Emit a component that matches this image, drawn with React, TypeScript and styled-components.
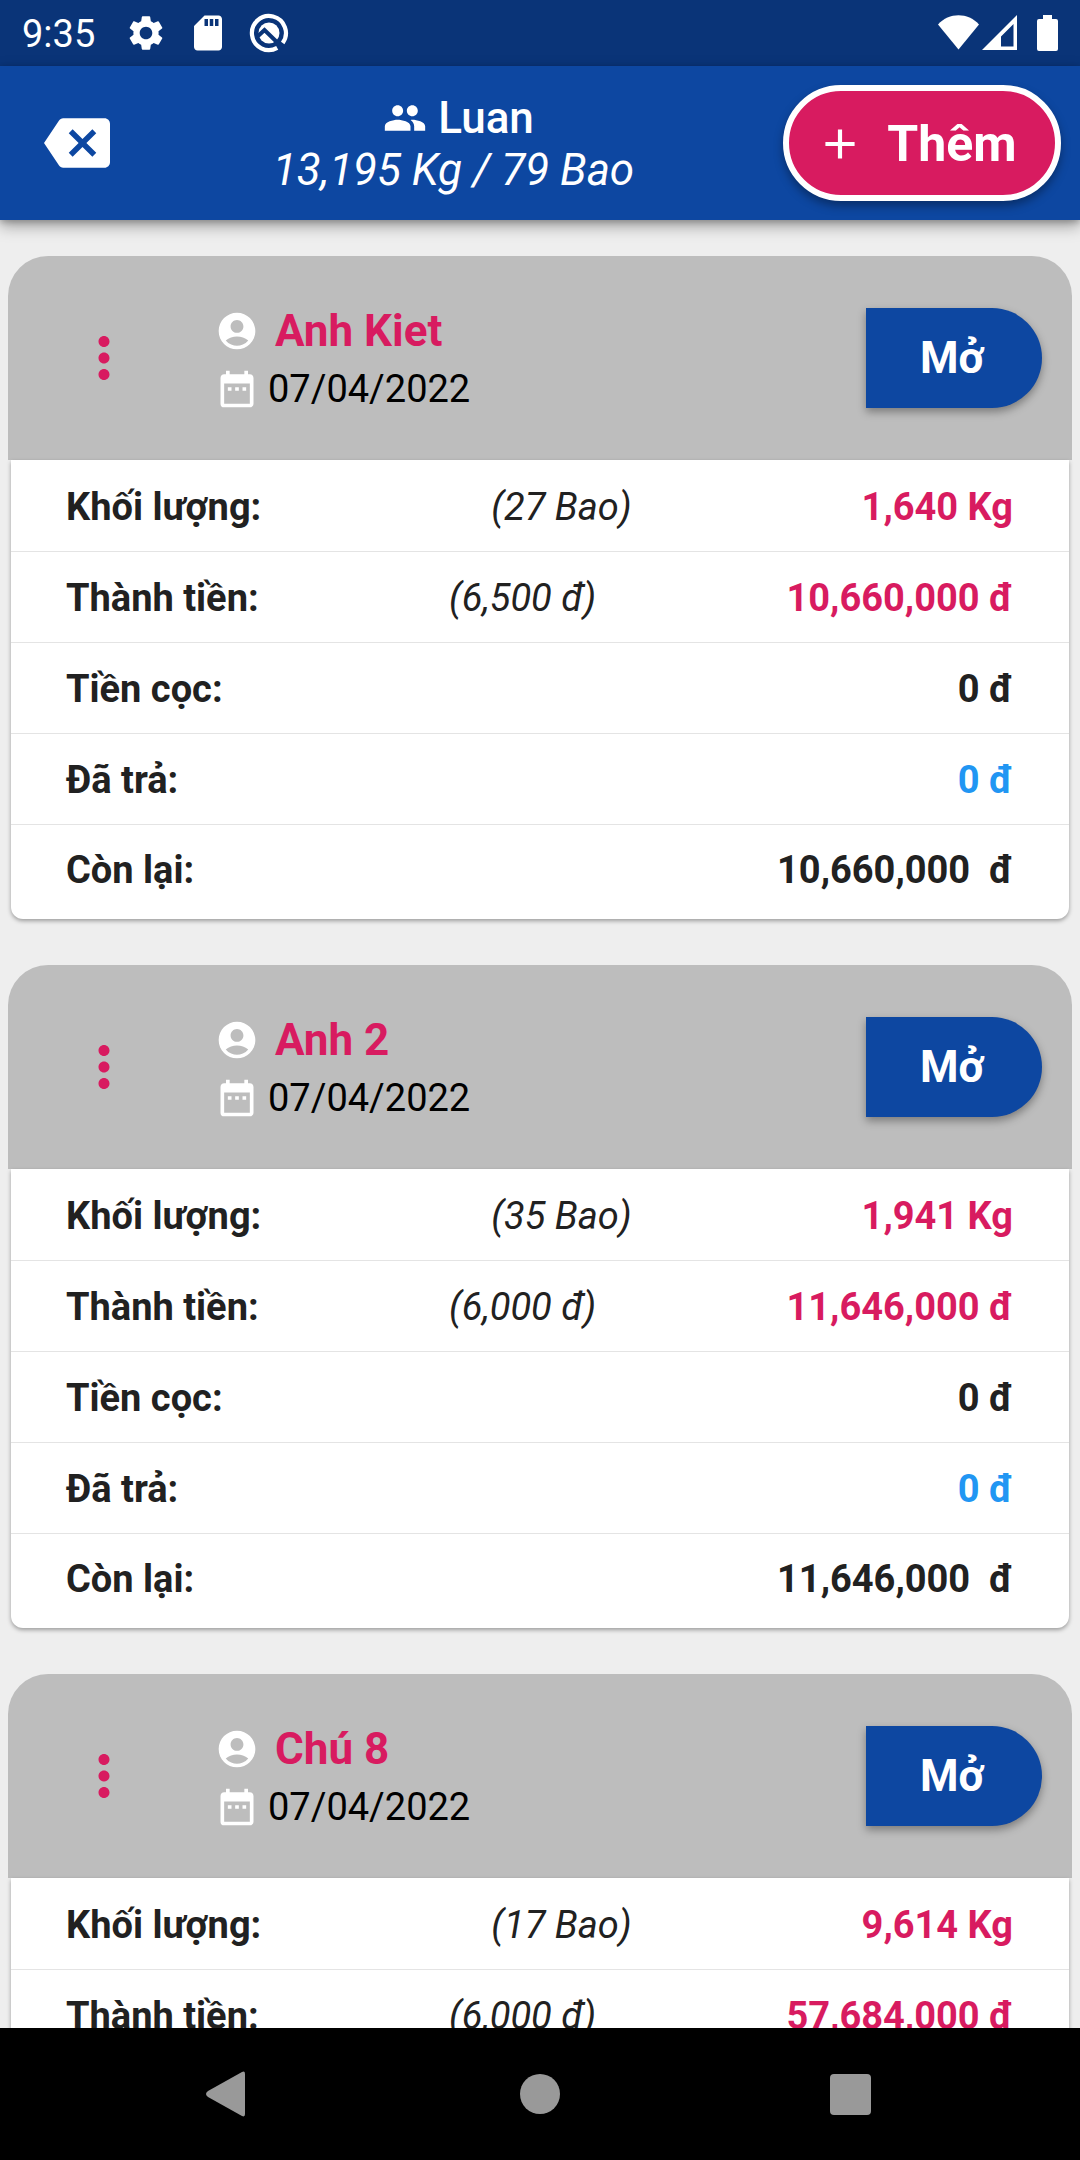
import React from "react";
import styled, { createGlobalStyle } from "styled-components";
import {
  MdAccountCircle,
  MdAdd,
  MdBackspace,
  MdDateRange,
  MdMoreVert,
  MdPeople,
  MdSdCard,
  MdSettings,
} from "react-icons/md";

const color = {
  statusBar: "#0a3478",
  primary: "#0d47a1",
  accent: "#d81b60",
  page: "#eeeeee",
  cardHeader: "#bdbdbd",
  text: "#212121",
  info: "#2196f3",
  divider: "#e4e4e4",
  navIcon: "#999999",
};

const GlobalStyle = createGlobalStyle`
  *, *::before, *::after { box-sizing: border-box; }
  body {
    margin: 0;
    background: ${color.page};
    color: ${color.text};
    font-family: Roboto, "Noto Sans", sans-serif;
    font-size: 38px;
    line-height: 44px;
  }
  button { font: inherit; color: inherit; border: 0; padding: 0; background: none; cursor: pointer; }
  h1, h2, p, dl, dd, dt { margin: 0; font: inherit; }
  svg { display: block; flex: none; }
`;

const Screen = styled.div`
  display: flex;
  flex-direction: column;
  height: 100vh;
  overflow: hidden;
`;

const StatusBar = styled.div`
  flex: none;
  display: flex;
  justify-content: space-between;
  align-items: center;
  height: 66px;
  padding: 0 22px;
  background: ${color.statusBar};
  color: #fff;
`;

const StatusGroup = styled.div`
  display: flex;
  align-items: center;
  gap: 20px;
`;

const Reception = styled.div`
  display: flex;
  gap: 3px;
`;

const Clock = styled.time`
  padding-top: 2px;
  margin-right: 10px;
`;

const AppBar = styled.header`
  flex: none;
  z-index: 1;
  display: flex;
  align-items: center;
  height: 154px;
  padding: 0 19px 0 44px;
  background: ${color.primary};
  color: #fff;
  box-shadow: 0 6px 14px rgba(0, 0, 0, 0.34), 0 2px 6px rgba(0, 0, 0, 0.2);
`;

const IconButton = styled.button`
  flex: none;
`;

const Title = styled.div`
  flex: 1;
  display: flex;
  flex-direction: column;
  align-items: center;
  padding: 1px 0 0 14px;
  font-size: 44px;
  line-height: 52px;
`;

const TitleName = styled.h1`
  && {
    display: flex;
    align-items: center;
    gap: 11px;
    padding-left: 10px;
    font-weight: 500;
  }
`;

const TitleTotal = styled.p`
  && {
    font-style: italic;
  }
`;

const AddButton = styled.button`
  && {
    display: flex;
    align-items: center;
    justify-content: center;
    gap: 22px;
    width: 278px;
    height: 116px;
    padding: 2px 12px 0 0;
    border: 6px solid #fff;
    border-radius: 58px;
    background: ${color.accent};
    font-size: 50px;
    font-weight: 700;
    box-shadow: 0 5px 10px rgba(0, 0, 0, 0.35);
  }
`;

const List = styled.main`
  flex: 1;
  min-height: 0;
  overflow-y: auto;
  scrollbar-width: none;
  display: flex;
  flex-direction: column;
  gap: 46px;
  padding: 36px 8px;
`;

const Card = styled.article`
  flex: none;
`;

const CardHeader = styled.header`
  display: flex;
  align-items: center;
  height: 204px;
  padding: 0 30px 0 63px;
  border-radius: 40px 40px 0 0;
  background: ${color.cardHeader};
`;

const MenuButton = styled(IconButton)`
  && {
    color: ${color.accent};
  }
`;

const Person = styled.div`
  flex: 1;
  display: flex;
  flex-direction: column;
  padding: 4px 0 0 78px;
`;

const PersonName = styled.h2`
  && {
    display: flex;
    align-items: center;
    gap: 16px;
    color: ${color.accent};
    font-size: 44px;
    line-height: 58px;
    font-weight: 700;
  }
`;

const PersonDate = styled.p`
  && {
    display: flex;
    align-items: center;
    gap: 9px;
    line-height: 58px;
    color: #000;
  }
`;

const OpenButton = styled.button`
  && {
    width: 176px;
    height: 100px;
    padding-right: 4px;
    border-radius: 0 50px 50px 0;
    background: ${color.primary};
    color: #fff;
    font-size: 44px;
    font-weight: 700;
    box-shadow: 0 4px 8px rgba(0, 0, 0, 0.35);
  }
`;

const CardBody = styled.dl`
  && {
    margin: 0 3px;
    padding: 1px 0 7px;
    border-radius: 0 0 12px 12px;
    background: #fff;
    box-shadow: 0 2px 4px rgba(0, 0, 0, 0.35);
  }
`;

const Row = styled.div`
  display: flex;
  align-items: center;
  justify-content: space-between;
  height: 91px;
  padding: 2px 56px 0 55px;
  border-bottom: 1px solid ${color.divider};

  &:last-child {
    height: 87px;
    border-bottom: 0;
  }
`;

const Label = styled.dt`
  && {
    font-weight: 700;
  }
`;

const Note = styled.dd`
  && {
    font-style: italic;
  }
`;

const Value = styled.dd<{ $tone?: string }>`
  && {
    font-weight: 700;
    white-space: pre;
    color: ${(p) => p.$tone ?? color.text};
  }
`;

const NavBar = styled.nav`
  flex: none;
  display: flex;
  align-items: center;
  justify-content: space-between;
  height: 132px;
  padding: 0 196px;
  background: #000;
`;

const WhiteIcon = styled.span`
  display: block;
  color: #fff;
`;

type Entry = {
  name: string;
  date: string;
  bags: string;
  weight: string;
  price: string;
  total: string;
};

const entries: Entry[] = [
  { name: "Anh Kiet", date: "07/04/2022", bags: "27", weight: "1,640", price: "6,500", total: "10,660,000" },
  { name: "Anh 2", date: "07/04/2022", bags: "35", weight: "1,941", price: "6,000", total: "11,646,000" },
  { name: "Chú 8", date: "07/04/2022", bags: "17", weight: "9,614", price: "6,000", total: "57,684,000" },
];

const DebugIcon = () => (
  <svg width="40" height="40" viewBox="0 0 40 40" aria-hidden="true">
    <path d="M28.200 34.900 A17 17 0 1 1 33.700 30" fill="none" stroke="#fff" strokeWidth="4.200" />
    <circle cx="20" cy="20" r="10.500" fill="#fff" />
    <path d="M8 24 L15.500 17 L34 35" fill="none" stroke={color.statusBar} strokeWidth="4" />
  </svg>
);

const WifiIcon = () => (
  <svg width="41" height="36" viewBox="0 0 41 36" aria-hidden="true">
    <path d="M0 9.500 C11 -2.700 30 -2.700 41 9.500 L20.500 34.500 Z" fill="#fff" />
  </svg>
);

const SignalIcon = () => (
  <svg width="35" height="36" viewBox="0 0 35 36" aria-hidden="true">
    <path d="M35 0 V35 H0 Z M31.500 9 L19 21.500 V31.500 H31.500 Z" fill="#fff" fillRule="evenodd" />
  </svg>
);

const BatteryIcon = () => (
  <svg width="21" height="36" viewBox="0 0 21 36" aria-hidden="true">
    <path d="M6 0 H15 V4 H19 Q21 4 21 6 V34 Q21 36 19 36 H2 Q0 36 0 34 V6 Q0 4 2 4 H6 Z" fill="#fff" />
  </svg>
);

const EntryCard = ({ entry }: { entry: Entry }) => (
  <Card>
    <CardHeader>
      <MenuButton aria-label="Menu">
        <MdMoreVert size={66} />
      </MenuButton>
      <Person>
        <PersonName>
          <WhiteIcon>
            <MdAccountCircle size={44} />
          </WhiteIcon>
          {entry.name}
        </PersonName>
        <PersonDate>
          <WhiteIcon>
            <MdDateRange size={44} />
          </WhiteIcon>
          {entry.date}
        </PersonDate>
      </Person>
      <OpenButton>Mở</OpenButton>
    </CardHeader>
    <CardBody>
      <Row>
        <Label>Khối lượng:</Label>
        <Note>({entry.bags} Bao)</Note>
        <Value $tone={color.accent}>{entry.weight} Kg</Value>
      </Row>
      <Row>
        <Label>Thành tiền:</Label>
        <Note>({entry.price} đ)</Note>
        <Value $tone={color.accent}>{entry.total} đ</Value>
      </Row>
      <Row>
        <Label>Tiền cọc:</Label>
        <Value>0 đ</Value>
      </Row>
      <Row>
        <Label>Đã trả:</Label>
        <Value $tone={color.info}>0 đ</Value>
      </Row>
      <Row>
        <Label>Còn lại:</Label>
        <Value>{entry.total}{"  "}đ</Value>
      </Row>
    </CardBody>
  </Card>
);

export default function App() {
  return (
    <>
      <GlobalStyle />
      <Screen>
        <StatusBar>
          <StatusGroup>
            <Clock>9:35</Clock>
            <MdSettings size={42} />
            <MdSdCard size={42} />
            <DebugIcon />
          </StatusGroup>
          <StatusGroup>
            <Reception>
              <WifiIcon />
              <SignalIcon />
            </Reception>
            <BatteryIcon />
          </StatusGroup>
        </StatusBar>
        <AppBar>
          <IconButton aria-label="Quay lại">
            <MdBackspace size={66} />
          </IconButton>
          <Title>
            <TitleName>
              <MdPeople size={44} />
              Luan
            </TitleName>
            <TitleTotal>13,195 Kg / 79 Bao</TitleTotal>
          </Title>
          <AddButton>
            <MdAdd size={50} />
            Thêm
          </AddButton>
        </AppBar>
        <List>
          {entries.map((entry) => (
            <EntryCard key={entry.name} entry={entry} />
          ))}
        </List>
        <NavBar>
          <IconButton aria-label="Back">
            <svg width="60" height="60" viewBox="0 0 60 60">
              <path d="M46 8 Q49 6.500 49 10 V50 Q49 53.500 46 52 L12 33 Q8 30 12 27 Z" fill={color.navIcon} />
            </svg>
          </IconButton>
          <IconButton aria-label="Home">
            <svg width="60" height="60" viewBox="0 0 60 60">
              <circle cx="30" cy="30" r="20" fill={color.navIcon} />
            </svg>
          </IconButton>
          <IconButton aria-label="Recent apps">
            <svg width="60" height="60" viewBox="0 0 60 60">
              <rect x="6" y="10" width="41" height="41" rx="4" fill={color.navIcon} />
            </svg>
          </IconButton>
        </NavBar>
      </Screen>
    </>
  );
}
